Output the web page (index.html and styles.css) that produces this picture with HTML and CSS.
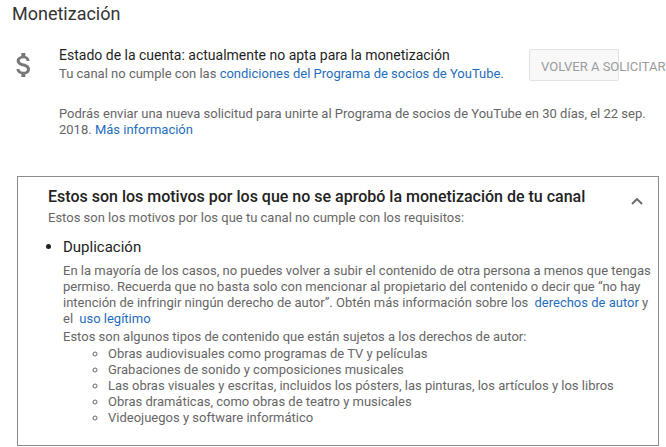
FILE: index.html
```html
<!DOCTYPE html>
<html lang="es">
<head>
    <meta charset="UTF-8">
    <meta name="viewport" content="width=device-width, initial-scale=1.0">
    <title>Monetización</title>
    <link rel="stylesheet" href="styles.css">
</head>
<body>
    <h2 class="page-title">Monetización</h2>

    <!-- Estado de la cuenta -->
    <div class="status">
        <svg class="status-icon" viewBox="0 0 24 24" width="32" height="32">
            <path d="M11.8 10.9c-2.27-.59-3-1.2-3-2.15 0-1.09 1.01-1.85 2.7-1.85 1.78 0 2.440.85 2.5 2.1h2.21c-.07-1.72-1.12-3.3-3.21-3.81V3h-3v2.16c-1.940.42-3.5 1.68-3.5 3.61 0 2.31 1.91 3.46 4.7 4.13 2.5.6 3 1.48 3 2.41 0 .69-.49 1.79-2.7 1.79-2.06 0-2.87-.92-2.98-2.1h-2.2c.12 2.19 1.76 3.42 3.68 3.83V21h3v-2.15c1.95-.37 3.5-1.5 3.5-3.55 0-2.84-2.43-3.81-4.7-4.4z"/>
        </svg>
        <div class="status-body">
            <div class="status-row">
                <div class="status-text">
                    <div class="status-title">Estado de la cuenta: actualmente no apta para la monetización</div>
                    <div class="status-sub">Tu canal no cumple con las <a href="#">condiciones del Programa de socios de YouTube</a>.</div>
                </div>
                <button class="btn-reapply">Volver a solicitar</button>
            </div>
            <p class="status-note">Podrás enviar una nueva solicitud para unirte al Programa de socios de YouTube en 30 días, el 22 sep. 2018. <a href="#">Más información</a></p>
        </div>
    </div>

    <!-- Motivos -->
    <div class="reasons">
        <div class="reasons-head">
            <div class="reasons-heading">
                <h3>Estos son los motivos por los que no se aprobó la monetización de tu canal</h3>
                <p>Estos son los motivos por los que tu canal no cumple con los requisitos:</p>
            </div>
            <svg class="chevron" viewBox="0 0 12 7" width="12" height="7">
                <polyline points="1,6 6,1 11,6"/>
            </svg>
        </div>
        <ul class="reasons-list">
            <li>
                <div class="reason-title">Duplicación</div>
                <p class="reason-text">En la mayoría de los casos, no puedes volver a subir el contenido de otra persona a menos que tengas permiso. Recuerda que no basta solo con mencionar al propietario del contenido o decir que “no hay intención de infringir ningún derecho de autor”. Obtén más información sobre los <a class="spaced" href="#">derechos de autor</a> y el <a class="spaced" href="#">uso legítimo</a></p>
                <p class="reason-text types">Estos son algunos tipos de contenido que están sujetos a los derechos de autor:</p>
                <ul class="types-list">
                    <li>Obras audiovisuales como programas de TV y películas</li>
                    <li>Grabaciones de sonido y composiciones musicales</li>
                    <li>Las obras visuales y escritas, incluidos los pósters, las pinturas, los artículos y los libros</li>
                    <li>Obras dramáticas, como obras de teatro y musicales</li>
                    <li>Videojuegos y software informático</li>
                </ul>
            </li>
        </ul>
    </div>
</body>
</html>
```

FILE: styles.css
```css
body { margin: 0; font-family: Roboto, "Liberation Sans", Arial, sans-serif; background: #fff; color: #222; }
a { color: #1f6dbd; text-decoration: none; }

.page-title { margin: 0; padding: 2px 12px 0; font-size: 18px; line-height: 24px; font-weight: 400; color: #333; }

/* estado */
.status { display: flex; margin-top: 19px; padding-left: 8px; }
.status-icon { flex: none; margin-top: 4px; margin-right: 19px; fill: #777; }
.status-body { flex: 1; min-width: 0; }
.status-row { display: flex; align-items: flex-start; margin-right: 47px; }
.status-text { flex: 1; }
.status-title { font-size: 14px; line-height: 20px; color: #1f1f1f; }
.status-sub { font-size: 13px; line-height: 18px; color: #666; }
.btn-reapply { flex: none; box-sizing: border-box; width: 90px; height: 32px; margin-top: 4px; padding: 3px 0 0 11px; border: 1px solid #e2e2e2; border-radius: 2px; background: #f8f8f8; color: #9b9b9b; font-family: Roboto, "Liberation Sans", Arial, sans-serif; font-size: 13px; line-height: 27px; text-align: left; text-transform: uppercase; white-space: nowrap; overflow: visible; }
.status-note { margin: 23px 0 0; font-size: 13px; line-height: 16px; color: #666; }

/* motivos */
.reasons { margin: 38px 7px 0 17px; padding: 10px 2px 19px 30px; border: 1px solid #8c8c8c; }
.reasons-head { display: flex; align-items: flex-start; }
.reasons-heading { flex: 1; }
.reasons-heading h3 { margin: 0; font-size: 16px; line-height: 20px; font-weight: 500; color: #222; }
.reasons-heading p { margin: 2px 0 0; font-size: 13px; line-height: 18px; color: #666; }
.chevron { flex: none; margin: 11px 13px 0 0; fill: none; stroke: #666; stroke-width: 1.8; }

.reasons-list { margin: 10px 0 0; padding-left: 15px; list-style: disc; color: #222; }
.reason-title { font-size: 15px; line-height: 20px; color: #222; }
.reason-text { margin: 6px 0 0; font-size: 13px; line-height: 16px; color: #666; }
.reason-text .spaced { margin-left: 3px; }
.reason-text.types { margin-top: 2px; }
.types-list { margin: 1px 0 0; padding-left: 45px; font-size: 13px; line-height: 16px; color: #666; }
```
